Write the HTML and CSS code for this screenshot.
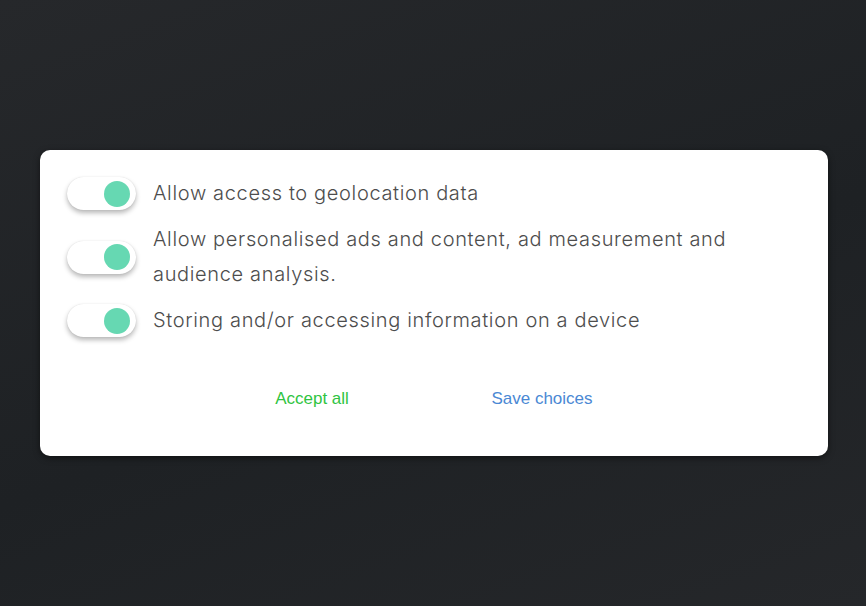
FILE: index.html
```html
<!DOCTYPE html>
<html lang="en">
<head>
<meta charset="utf-8">
<title>Consent</title>
<link rel="stylesheet" href="styles.css">
</head>
<body>
<div class="page">
  <div class="card">
    <ul class="options">
      <li class="option">
        <span class="toggle"><span class="knob"></span></span>
        <span class="label">Allow access to geolocation data</span>
      </li>
      <li class="option">
        <span class="toggle"><span class="knob"></span></span>
        <span class="label">Allow personalised ads and content, ad measurement and audience analysis.</span>
      </li>
      <li class="option">
        <span class="toggle"><span class="knob"></span></span>
        <span class="label">Storing and/or accessing information on a device</span>
      </li>
    </ul>
    <div class="actions">
      <button class="btn btn-accept">Accept all</button>
      <button class="btn btn-save">Save choices</button>
    </div>
  </div>
</div>
</body>
</html>
```

FILE: styles.css
```css
* { box-sizing: border-box; }
html, body { margin: 0; padding: 0; height: 100%; }
body {
  background: linear-gradient(160deg, #26282b 0%, #1e2124 55%, #25272a 100%);
  font-family: "Inter", "Open Sans", sans-serif;
}
.page {
  padding: 150px 38px 0 40px;
}
.card {
  background: #fff;
  border-radius: 10px;
  padding: 26px 27px 48px 27px;
  box-shadow: 0 2px 6px rgba(0,0,0,0.5);
}
.options {
  list-style: none;
  margin: 0;
  padding: 0;
  display: flex;
  flex-direction: column;
  gap: 11px;
}
.option {
  display: flex;
  align-items: center;
  gap: 17px;
}
.toggle {
  flex: none;
  width: 69px;
  height: 33px;
  border-radius: 17px;
  background: #fff;
  box-shadow: 0 3px 5px rgba(0,0,0,0.28), 0 0 1px rgba(0,0,0,0.15);
  display: flex;
  align-items: center;
  justify-content: flex-end;
  padding-right: 6px;
}
.knob {
  width: 26px;
  height: 26px;
  border-radius: 50%;
  background: #66d8b2;
}
.label {
  font-size: 20px;
  font-weight: 300;
  letter-spacing: 0.65px;
  line-height: 35px;
  color: #4d4d4d;
}
.actions {
  display: flex;
  justify-content: center;
  gap: 0;
  margin-top: 52px;
  padding-right: 14px;
}
.btn {
  border: none;
  background: none;
  font-family: "Liberation Sans", Arial, sans-serif;
  font-size: 17px;
  width: 230px;
  padding: 0;
  line-height: 18px;
  cursor: pointer;
}
.btn-accept { color: #2fc442; }
.btn-save { color: #4a88d4; }
```
